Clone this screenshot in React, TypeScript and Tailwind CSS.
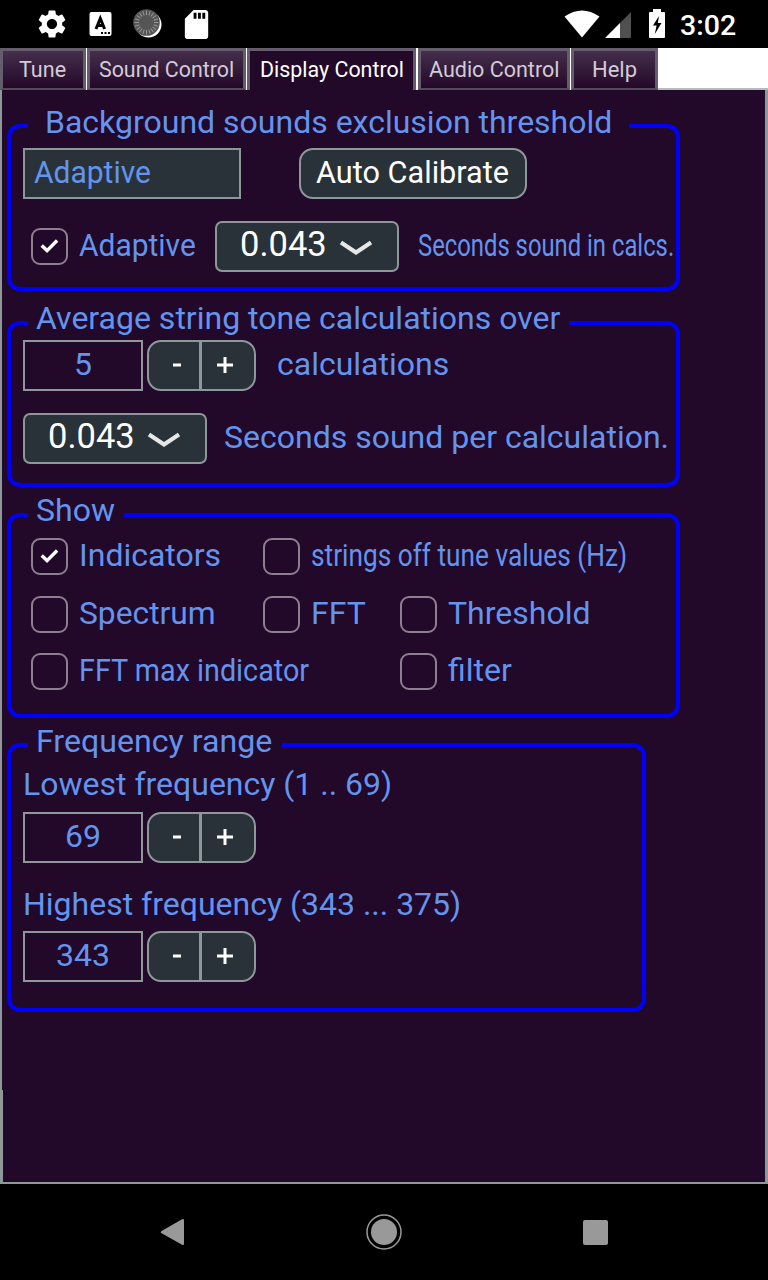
import { useLayoutEffect, useRef, useState } from "react";
import type { ReactNode } from "react";
import { MdSdStorage, MdSettings } from "react-icons/md";

/* Label whose glyphs are stretched or squeezed horizontally to fill its width. */
function FitText({ width, className = "", children }: { width: number; className?: string; children: string }) {
  const ref = useRef<HTMLSpanElement>(null);
  const [scale, setScale] = useState(1);
  useLayoutEffect(() => {
    if (ref.current) setScale(width / ref.current.offsetWidth);
  }, [width]);
  return (
    <span className={`block shrink-0 whitespace-pre ${className}`} style={{ width }}>
      <span ref={ref} className="inline-block origin-left" style={{ transform: `scaleX(${scale})` }}>
        {children}
      </span>
    </span>
  );
}

const label = "text-[32px] leading-[36px] text-[#6394ee]";

function Tab({ width, textWidth, active = false, children }: { width: string; textWidth: number; active?: boolean; children: string }) {
  return (
    <div
      className={`flex h-[42px] shrink-0 justify-center border-x-[3px] border-t-[3px] border-[#655d6e] ${width} ${
        active
          ? "bg-[#220829] text-white"
          : "border-b-2 border-b-[#544a5b] bg-linear-to-b from-[#452f4c] to-[#230829] pr-px text-[#d3cbd6]"
      }`}
    >
      <FitText width={textWidth} className="pt-[5.5px] text-[22px] leading-[26px]">{children}</FitText>
    </div>
  );
}

function Group({ title, titleWidth, className, legendClass, children }: { title: string; titleWidth: number; className: string; legendClass: string; children: ReactNode }) {
  return (
    <fieldset className={`ml-[7px] shrink-0 rounded-[13px] border-4 border-[#0000ff] pl-[12px] ${className}`}>
      <legend className={`ml-[5px] flex h-[32px] ${legendClass}`}>
        <FitText width={titleWidth} className={`-mt-[7px] ${label}`}>{title}</FitText>
      </legend>
      {children}
    </fieldset>
  );
}

function CheckBox({ checked = false }: { checked?: boolean }) {
  return (
    <span className="flex size-[37px] shrink-0 items-center justify-center rounded-[9px] border-2 border-[#8d7e90]">
      {checked && (
        <svg className="size-[19px]" viewBox="0 0 20 20" fill="none" stroke="white" strokeWidth="3.6">
          <path d="M1.8 9 7.4 14.3 18 3.7" />
        </svg>
      )}
    </span>
  );
}

function Option({ text, width, checked }: { text: string; width: number; checked?: boolean }) {
  return (
    <label className="flex h-[37px] items-center gap-[11px]">
      <CheckBox checked={checked} />
      <FitText width={width} className={`mb-[3px] ${label}`}>{text}</FitText>
    </label>
  );
}

function Stepper({ value, width }: { value: string; width: number }) {
  return (
    <div className="flex h-[51px] shrink-0 items-center gap-[4px]">
      <div className="flex h-[51px] w-[120px] items-center justify-center border-2 border-[#8e989b]">
        <FitText width={width} className={`mb-[4px] ${label}`}>{value}</FitText>
      </div>
      <div className="flex h-[51px] w-[109px] overflow-hidden rounded-[14px] border-2 border-[#8e989b] bg-[#293238] text-white">
        <button className="flex w-[53px] items-center justify-center border-r-[3px] border-[#8e989b] pb-[2px] pl-[6px]">
          <svg className="h-[18px] w-[18px]" viewBox="0 0 18 18"><path d="M5 7.5h8v3H5z" fill="white" /></svg>
        </button>
        <button className="flex flex-1 items-center justify-center pb-[2px] pr-[7px]">
          <svg className="h-[18px] w-[18px]" viewBox="0 0 18 18"><path d="M1 7.500h6.500V1h3v6.500H17v3h-6.500V17h-3v-6.500H1z" fill="white" /></svg>
        </button>
      </div>
    </div>
  );
}

function Select() {
  return (
    <div className="flex h-[51px] w-[184px] shrink-0 items-center rounded-[7px] border-2 border-[#8e989b] bg-[#293238] pl-[23px]">
      <FitText width={87} className="mb-[5px] text-[34.5px] leading-[38px] text-white">0.043</FitText>
      <svg className="ml-[12px] mt-[3px] h-[18px] w-[34px]" viewBox="0 0 34 18" fill="none" stroke="#e6e8e8" strokeWidth="4.200">
        <path d="M2 3.500 17 13.500 32 3.500" />
      </svg>
    </div>
  );
}

function StatusBar() {
  const ticks = Array.from({ length: 20 }, (_, i) => i * 18);
  return (
    <header className="flex h-[48px] shrink-0 items-center bg-black">
      <MdSettings className="ml-[35px] size-[34px] text-white" />
      <svg className="ml-[20px] size-[24px]" viewBox="0 0 24 24">
        <rect x="0.500" width="22" height="24" rx="2" fill="white" />
        <path d="M7 17 11.300 6.500 15.600 17M8.500 13.500h5.600" fill="none" stroke="black" strokeWidth="3" />
        <path d="M12 20h2v2h-2zM15.500 20h2v2h-2zM19 20h2v2h-2z" fill="black" />
      </svg>
      <svg className="ml-[20px] size-[30px]" viewBox="0 0 30 30">
        <circle cx="15.500" cy="15.500" r="13" fill="white" />
        <circle cx="13.500" cy="13.500" r="13.300" fill="#555" />
        {ticks.map((a) => (
          <path key={a} d="M13.500 1.500v4.500" stroke="#999" strokeWidth="1" transform={`rotate(${a} 13.500 13.500)`} />
        ))}
      </svg>
      <MdSdStorage className="ml-[16px] size-[35px] text-white" />
      <svg className="ml-auto h-[28px] w-[36px]" viewBox="0 0 36 28">
        <path d="M.5 6.500Q18-5.500 35.500 6.500L18 27.500Z" fill="white" />
      </svg>
      <svg className="ml-[5px] mt-[2px] size-[27px]" viewBox="0 0 27 27">
        <path d="M15 11 26 0v25q0 1-1 1H15z" fill="#505050" />
        <path d="M0 26 15 11V26z" fill="white" />
      </svg>
      <svg className="ml-[17px] h-[30px] w-[16px]" viewBox="0 0 16 30">
        <path d="M4 0h8v3h3q1 0 1 1v24q0 1-1 1H1q-1 0-1-1V4q0-1 1-1h3z" fill="white" />
        <path d="M10 7 4 16.500h3.600L5.800 25 12.500 14H8.800z" fill="black" />
      </svg>
      <FitText width={56} className="mr-[32px] ml-[15px] mt-[3px] text-[28px] leading-[34px] font-medium text-white">3:02</FitText>
    </header>
  );
}

export default function App() {
  return (
    <div className="flex h-[1280px] w-[768px] flex-col overflow-hidden bg-black font-['Roboto',sans-serif] select-none">
      <StatusBar />
      <nav className="flex h-[42px] shrink-0 bg-white">
        <Tab width="w-[86px]" textWidth={47}>Tune</Tab>
        <Tab width="ml-px w-[159px]" textWidth={135}>Sound Control</Tab>
        <Tab width="ml-px w-[169px] pl-px" textWidth={144} active>Display Control</Tab>
        <Tab width="ml-[2px] w-[152px]" textWidth={130}>Audio Control</Tab>
        <Tab width="ml-px w-[87px] pl-px" textWidth={45}>Help</Tab>
        <div className="flex-1 border-b-2 border-[#b6bcbe]" />
      </nav>
      <main className="flex h-[1094px] shrink-0 border-r-[3px] border-b-2 border-[#8e989b] bg-[#220829]">
        <div className="flex w-[3px] shrink-0 flex-col">
          <span className="h-[1000px] w-[2px] bg-[#8e989b]" />
          <span className="flex-1 bg-[#8e989b]" />
        </div>
        <div className="-ml-[3px] flex flex-col pt-[20px]">
          <Group title="Background sounds exclusion threshold" titleWidth={567} className="h-[181px] w-[673px]" legendClass="w-[601px] pl-[17px] pt-px">
            <div className="mt-[6px] flex h-[51px] items-center">
              <div className="flex h-[51px] w-[218px] items-center border-2 border-[#8e989b] bg-[#293238] pl-[9px]">
                <FitText width={117} className="mb-[2px] text-[30.5px] leading-[36px] text-[#6394ee]">Adaptive</FitText>
              </div>
              <button className="ml-[58px] flex h-[51px] w-[228px] items-center justify-center rounded-[14px] border-2 border-[#8e989b] bg-[#293238] pr-px">
                <FitText width={193} className="mb-[2px] text-left text-[30.5px] leading-[36px] text-white">Auto Calibrate</FitText>
              </button>
            </div>
            <div className="mt-[22px] flex h-[51px] items-center pl-[8px]">
              <Option text="Adaptive" width={117} checked />
              <div className="ml-[19px] flex items-center gap-[19px]">
                <Select />
                <FitText width={256} className={`mb-[3px] ${label}`}>Seconds sound in calcs.</FitText>
              </div>
            </div>
          </Group>
          <Group title="Average string tone calculations over" titleWidth={524} className="mt-[16px] h-[180px] w-[673px]" legendClass="w-[541px] pl-[8px]">
            <div className="mt-px flex items-center gap-[21px]">
              <Stepper value="5" width={18} />
              <FitText width={172} className={`mb-[4px] ${label}`}>calculations</FitText>
            </div>
            <div className="mt-[22px] flex items-center gap-[17px]">
              <Select />
              <FitText width={445} className={`mb-[3px] ${label}`}>Seconds sound per calculation.</FitText>
            </div>
          </Group>
          <Group title="Show" titleWidth={79} className="mt-[12px] h-[219px] w-[673px]" legendClass="w-[96px] pl-[8px]">
            <div className="mt-[7px] grid grid-cols-[232px_137px_1fr] gap-y-[20.5px] pl-[8px]">
              <Option text="Indicators" width={142} checked />
              <div className="col-span-2"><Option text="strings off tune values (Hz)" width={316} /></div>
              <Option text="Spectrum" width={137} />
              <Option text="FFT" width={55} />
              <Option text="Threshold" width={142} />
              <div className="col-span-2"><Option text="FFT max indicator" width={230} /></div>
              <Option text="filter" width={64} />
            </div>
          </Group>
          <Group title="Frequency range" titleWidth={236} className="mt-[11px] h-[283px] w-[639px]" legendClass="w-[254px] pl-[8px] pt-px">
            <FitText width={369} className={`mt-[5px] ${label}`}>Lowest frequency (1 .. 69)</FitText>
            <div className="mt-[10px]"><Stepper value="69" width={36} /></div>
            <FitText width={438} className={`mt-[23px] ${label}`}>Highest frequency (343 ... 375)</FitText>
            <div className="mt-[9px]"><Stepper value="343" width={54} /></div>
          </Group>
        </div>
      </main>
      <footer className="flex flex-1 items-center bg-black text-[#999]">
        <svg className="ml-[160px] h-[28px] w-[25px]" viewBox="0 0 25 28">
          <path d="M1.200 13.200 22 1.200q2-.7 2 1v23.600q0 1.700-2 1L1.200 15q-1.200-.9 0-1.800z" fill="currentColor" />
        </svg>
        <svg className="ml-[181px] size-[36px]" viewBox="0 0 36 36">
          <circle cx="18" cy="18" r="17" fill="none" stroke="currentColor" strokeWidth="1.500" />
          <circle cx="18" cy="18" r="13" fill="currentColor" />
        </svg>
        <span className="ml-[181px] size-[25px] rounded-[2px] bg-[#999]" />
      </footer>
    </div>
  );
}
